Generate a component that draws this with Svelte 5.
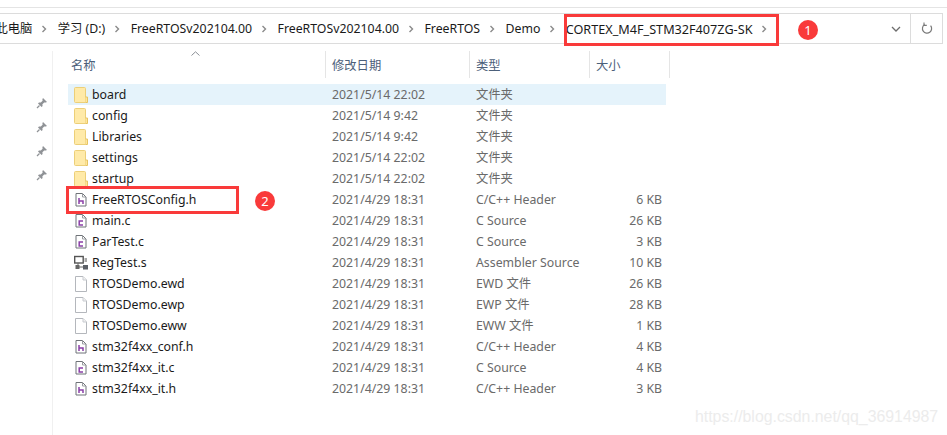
<script>
  const crumbs = ['此电脑', '学习 (D:)', 'FreeRTOSv202104.00', 'FreeRTOSv202104.00', 'FreeRTOS', 'Demo', 'CORTEX_M4F_STM32F407ZG-SK'];
  const files = [
    ['board', '2021/5/14 22:02', '文件夹', '', 'folder'],
    ['config', '2021/5/14 9:42', '文件夹', '', 'folder'],
    ['Libraries', '2021/5/14 9:42', '文件夹', '', 'folder'],
    ['settings', '2021/5/14 22:02', '文件夹', '', 'folder'],
    ['startup', '2021/5/14 22:02', '文件夹', '', 'folder'],
    ['FreeRTOSConfig.h', '2021/4/29 18:31', 'C/C++ Header', '6 KB', 'h'],
    ['main.c', '2021/4/29 18:31', 'C Source', '26 KB', 'c'],
    ['ParTest.c', '2021/4/29 18:31', 'C Source', '3 KB', 'c'],
    ['RegTest.s', '2021/4/29 18:31', 'Assembler Source', '10 KB', 's'],
    ['RTOSDemo.ewd', '2021/4/29 18:31', 'EWD 文件', '26 KB', 'blank'],
    ['RTOSDemo.ewp', '2021/4/29 18:31', 'EWP 文件', '28 KB', 'blank'],
    ['RTOSDemo.eww', '2021/4/29 18:31', 'EWW 文件', '1 KB', 'blank'],
    ['stm32f4xx_conf.h', '2021/4/29 18:31', 'C/C++ Header', '4 KB', 'h'],
    ['stm32f4xx_it.c', '2021/4/29 18:31', 'C Source', '4 KB', 'c'],
    ['stm32f4xx_it.h', '2021/4/29 18:31', 'C/C++ Header', '3 KB', 'h']
  ];
  const pins = [0, 1, 2, 3];
</script>

<div class="window">
  <div class="topline"></div>
  <div class="address">
    <div class="crumbs">
      {#each crumbs as c}
        <span class="crumb">{c}</span>
        <svg class="chev" width="6" height="8" viewBox="0 0 6 8"><path d="M1.5 1 L4.5 4 L1.5 7" fill="none" stroke="#8a8a8a" stroke-width="1.4"/></svg>
      {/each}
    </div>
    <svg class="drop" width="10" height="6" viewBox="0 0 10 6"><path d="M1 1 L5 5 L9 1" fill="none" stroke="#6d6d6d" stroke-width="1.3"/></svg>
    <div class="refresh">
      <svg width="12" height="13" viewBox="0 0 12 13"><path d="M9.6 3.6 A4.6 4.6 0 1 1 3.6 2.6" fill="none" stroke="#7a7a7a" stroke-width="1.2"/><path d="M3 0.6 V3.4 H5.8" fill="none" stroke="#7a7a7a" stroke-width="1.1"/></svg>
    </div>
  </div>

  <div class="body">
    <div class="nav">
      {#each pins as p}
        <svg class="pin" width="12" height="12" viewBox="0 0 12 12"><path d="M7 1 L11 5 L9.8 5.6 L8.2 5.4 L6.4 7.2 L6.6 9 L5.6 10 L2 6.4 L3 5.4 L4.8 5.6 L6.6 3.8 L6.4 2.2 Z" fill="#8f9296"/><path d="M3.5 8.5 L1 11" stroke="#8f9296" stroke-width="1.2"/></svg>
      {/each}
    </div>
    <div class="main">
      <div class="head">
        <div class="hc name">名称<svg class="sort" width="9" height="5" viewBox="0 0 9 5"><path d="M0.5 4.5 L4.5 0.8 L8.5 4.5" fill="none" stroke="#8a8f96"/></svg></div>
        <div class="hc date">修改日期</div>
        <div class="hc type">类型</div>
        <div class="hc size">大小</div>
      </div>
      <div class="rows">
        {#each files as f, i}
          <div class="row" class:sel={i === 0}>
            <div class="cell name">
              {#if f[4] === 'folder'}
                <svg class="ic" width="16" height="16" viewBox="0 0 16 16"><path d="M1.5 0.5 H10.5 Q11.5 0.5 11.5 1.5 V15.5 H1.5 Q0.5 15.5 0.5 14.5 V1.5 Q0.5 0.5 1.5 0.5 Z" fill="#ffeaa8" stroke="#eccf78"/><path d="M11.5 10 H13.5 V15.5 H11.5" fill="#ffe59a" stroke="#e6c463"/></svg>
              {:else if f[4] === 'blank'}
                <svg class="ic" width="16" height="16" viewBox="0 0 16 16"><path d="M1.5 0.5 H9 L12.5 4 V15.5 H1.5 Z" fill="#fff" stroke="#b4b7bc"/><path d="M9 0.5 V4 H12.5" fill="#f2f2f2" stroke="#c8cbd0"/></svg>
              {:else if f[4] === 's'}
                <svg class="ic" width="16" height="16" viewBox="0 0 16 16"><rect x="0.7" y="1.5" width="8.5" height="6.5" fill="#fff" stroke="#555" stroke-width="1.4"/><path d="M4 8 V12 H9" fill="none" stroke="#666"/><rect x="1.5" y="10" width="4" height="4" fill="#666"/><rect x="9" y="10" width="5" height="4.5" fill="#5b5f66"/><rect x="10.5" y="3" width="2.5" height="4" fill="#a8a8a8"/></svg>
              {:else}
                <svg class="ic" width="16" height="16" viewBox="0 0 16 16"><path d="M2 1.5 H8.5 L12 5 V14 H2 Z" fill="#fff" stroke="#6f7378"/><path d="M8.5 1.5 V5 H12" fill="none" stroke="#9a9da1"/>
                  {#if f[4] === 'h'}<path d="M5 6 V12 M5 9 H9 V12" fill="none" stroke="#8a3fa8" stroke-width="1.5"/>{:else}<path d="M9 8 H5.2 V12 H9" fill="none" stroke="#8a3fa8" stroke-width="1.5"/>{/if}
                </svg>
              {/if}
              <span class="fname">{f[0]}</span>
            </div>
            <div class="cell date muted">{f[1]}</div>
            <div class="cell type muted">{f[2]}</div>
            <div class="cell size muted">{f[3]}</div>
          </div>
        {/each}
      </div>
    </div>
  </div>

  <div class="box box1"></div>
  <div class="dot dot1">1</div>
  <div class="box box2"></div>
  <div class="dot dot2">2</div>
  <div class="mark">https://blog.csdn.net/qq_36914987</div>
</div>

<style>
  :global(body) { margin: 0; background: #fff; }
  .window {
    position: relative;
    width: 947px;
    height: 435px;
    overflow: hidden;
    background: #fff;
    font-family: "Noto Sans", "Noto Sans CJK SC", sans-serif;
    font-size: 12.3px;
    color: #1a1a1a;
  }
  .topline { height: 7px; border-bottom: 1px solid #e4e4e4; }
  .address {
    box-sizing: border-box;
    margin-top: 5px;
    width: 943px;
    height: 31px;
    border: 1px solid #dcdcdc;
    border-left: none;
    display: flex;
    align-items: center;
    overflow: hidden;
  }
  .crumbs { display: flex; align-items: center; margin-left: -4.5px; flex: 1; white-space: nowrap; }
  .crumb { line-height: 20px; }
  .crumb:last-of-type { font-size: 12.65px; }
  .chev { margin: 0 10.4px 0 9px; flex: none; }
  .drop { margin-right: 9px; }
  .refresh {
    width: 31px;
    align-self: stretch;
    border-left: 1px solid #dcdcdc;
    display: flex;
    align-items: center;
    justify-content: center;
  }
  .body { display: flex; margin-top: 7px; }
  .nav {
    box-sizing: border-box;
    width: 53px;
    height: 390px;
    border-right: 1px solid #f0f0f0;
    display: flex;
    flex-direction: column;
    align-items: flex-end;
    gap: 12px;
    padding: 46px 4px 0 0;
  }
  .main { padding-left: 15px; }
  .head { display: flex; height: 27px; color: #4c607a; }
  .hc {
    box-sizing: border-box;
    height: 27px;
    border-right: 1px solid #e5e5e5;
    display: flex;
    align-items: center;
    padding-left: 6px;
    position: relative;
  }
  .hc.name { padding-left: 3px; }
  .sort { position: absolute; left: 123px; top: 0; }
  .name { width: 258px; }
  .date { width: 144px; }
  .type { width: 120px; }
  .size { width: 80px; }
  .rows { margin-top: 6px; }
  .row { display: flex; height: 21px; width: 598px; }
  .row.sel { background: #e5f3fb; }
  .cell { display: flex; align-items: center; line-height: 21px; white-space: nowrap; box-sizing: border-box; padding-left: 6px; }
  .cell.name { padding-left: 6px; }
  .cell.size { width: 76px; padding: 0 4px 0 0; justify-content: flex-end; }
  .muted { color: #6a6a6a; }
  .ic { flex: none; margin-right: 2px; }
  .fname { color: #1a1a1a; }
  .box { position: absolute; box-sizing: border-box; border: 3px solid #f93a3a; }
  .box1 { left: 564px; top: 14px; width: 215px; height: 32px; }
  .box2 { left: 66px; top: 186px; width: 173px; height: 28px; }
  .dot {
    position: absolute;
    width: 20px;
    height: 20px;
    border-radius: 50%;
    background: #f93a3a;
    color: #fff;
    font-size: 13px;
    line-height: 20px;
    text-align: center;
  }
  .dot1 { left: 798px; top: 20px; }
  .dot2 { left: 255px; top: 191px; }
  .mark {
    position: absolute;
    left: 695px;
    top: 407px;
    font-family: "Liberation Sans", sans-serif;
    font-size: 15.85px;
    line-height: 20px;
    color: #ececec;
    white-space: nowrap;
  }
</style>
